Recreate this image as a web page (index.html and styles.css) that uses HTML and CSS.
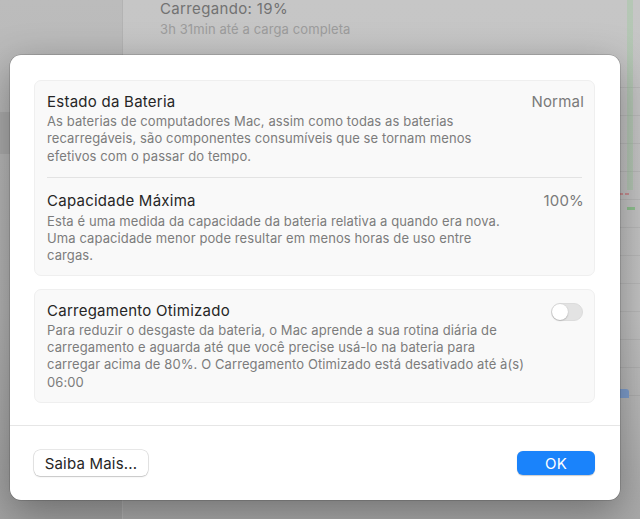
FILE: index.html
```html
<!DOCTYPE html>
<html lang="pt-BR">
<head>
<meta charset="utf-8">
<title>Saúde da Bateria</title>
<link rel="stylesheet" href="styles.css">
</head>
<body>
<div class="desktop">
  <aside class="sidebar">
    <div class="side-band"></div>
  </aside>
  <main class="main">
    <div class="status">
      <div class="status-title">Carregando: 19%</div>
      <div class="status-sub">3h 31min até a carga completa</div>
    </div>
    <div class="chart">
      <div class="chart-green"></div>
      <div class="chart-red"></div>
      <div class="chart-green-mark"></div>
      <div class="chart-blue"></div>
    </div>
  </main>

  <div class="dialog">
    <div class="dialog-body">
      <section class="group">
        <div class="row">
          <div class="row-text">
            <div class="row-title">Estado da Bateria</div>
            <p class="row-desc">As baterias de computadores Mac, assim como todas as baterias<br>recarregáveis, são componentes consumíveis que se tornam menos<br>efetivos com o passar do tempo.</p>
          </div>
          <div class="row-value">Normal</div>
        </div>
        <div class="row row-sep">
          <div class="row-text">
            <div class="row-title">Capacidade Máxima</div>
            <p class="row-desc">Esta é uma medida da capacidade da bateria relativa a quando era nova.<br>Uma capacidade menor pode resultar em menos horas de uso entre<br>cargas.</p>
          </div>
          <div class="row-value">100%</div>
        </div>
      </section>
      <section class="group">
        <div class="row">
          <div class="row-text">
            <div class="row-title">Carregamento Otimizado</div>
            <p class="row-desc">Para reduzir o desgaste da bateria, o Mac aprende a sua rotina diária de<br>carregamento e aguarda até que você precise usá-lo na bateria para<br>carregar acima de 80%. O Carregamento Otimizado está desativado até à(s)<br>06:00</p>
          </div>
          <div class="toggle"><span class="knob"></span></div>
        </div>
      </section>
    </div>
    <footer class="dialog-footer">
      <button class="btn">Saiba Mais...</button>
      <button class="btn btn-primary">OK</button>
    </footer>
  </div>
</div>
</body>
</html>
```

FILE: styles.css
```css
* { box-sizing: border-box; }
html, body { margin: 0; padding: 0; }
body {
  width: 640px;
  height: 519px;
  overflow: hidden;
  font-family: Inter, "Liberation Sans", Arial, sans-serif;
  -webkit-font-smoothing: antialiased;
}
.desktop {
  position: relative;
  display: flex;
  width: 640px;
  height: 519px;
}
.sidebar {
  width: 123px;
  flex: none;
  background: linear-gradient(to bottom, #bcbcbc 0%, #b4b4b4 60%, #a2a2a2 100%);
  border-right: 1px solid #b3b3b3;
  padding-top: 112px;
}
.side-band {
  height: 42px;
  background: #acacac;
}
.main {
  flex: 1;
  position: relative;
  background: linear-gradient(to bottom, #c6c6c6 0%, #c3c3c3 60%, #a9a9a9 100%);
  padding-left: 37px;
}
.status-title {
  font-size: 15px;
  line-height: 18px;
  color: #727272;
  letter-spacing: 0.35px;
}
.status-sub {
  font-size: 13px;
  line-height: 18px;
  color: #9c9c9c;
  margin-top: 2px;
  letter-spacing: 0.1px;
}
.chart {
  position: absolute;
  left: 490px;
  top: 60px;
  width: 30px;
  height: 360px;
  background: repeating-linear-gradient(to bottom, transparent 0 27px, rgba(0,0,0,0.06) 27px 28px);
}
.chart-green {
  position: absolute;
  left: 14px; top: -60px;
  width: 6px; height: 190px;
  background: rgba(150, 200, 150, 0.35);
}
.chart-red {
  position: absolute;
  left: 0; top: 133px;
  width: 18px; height: 2px;
  background: repeating-linear-gradient(to right, #c98f92 0 4px, transparent 4px 6px);
}
.chart-green-mark {
  position: absolute;
  left: 14px; top: 147px;
  width: 8px; height: 3px;
  background: #8fc08f;
}
.chart-blue {
  position: absolute;
  left: 0; top: 329px;
  width: 16px; height: 9px;
  border-radius: 3px 3px 0 0;
  background: #7f9fcf;
}

.dialog {
  position: absolute;
  left: 10px;
  top: 55px;
  width: 610px;
  height: 445px;
  background: #ffffff;
  border-radius: 11px;
  box-shadow: 0 0 0 0.5px rgba(0,0,0,0.25), 0 12px 40px rgba(0,0,0,0.35);
  display: flex;
  flex-direction: column;
}
.dialog-body {
  padding: 25px 25px 0 24px;
  display: flex;
  flex-direction: column;
  gap: 13px;
  height: 371px;
  border-bottom: 1px solid #e6e6e6;
}
.group {
  background: #f9f9f9;
  border: 1px solid #efefef;
  border-radius: 7px;
  padding: 0 12px;
}
.row {
  display: flex;
  justify-content: space-between;
  align-items: flex-start;
  padding: 12px 0 12px 0;
}
.row-sep {
  border-top: 1px solid #e3e3e3;
  padding-top: 14px;
  padding-bottom: 10px;
}
.row-sep .row-desc { margin-top: 3px; }
.group:last-child .row { padding-bottom: 11px; }
.row-text { flex: 1; }
.row-title {
  font-size: 15px;
  line-height: 18px;
  color: #262626;
  letter-spacing: 0.25px;
}
.row-desc {
  margin: 2px 0 0 0;
  font-size: 13px;
  line-height: 17.3px;
  color: #7c7c7c;
  letter-spacing: 0.1px;
}
.row-value {
  font-size: 15px;
  line-height: 18px;
  color: #7a7a7a;
  flex: none;
  margin-right: -2px;
  letter-spacing: 0.2px;
}
.toggle {
  margin-top: 1px;
  margin-right: -1px;
  width: 32px;
  height: 18px;
  border-radius: 9px;
  background: #e3e3e3;
  border: 1px solid #dcdcdc;
  position: relative;
  flex: none;
}
.knob {
  position: absolute;
  left: 0px; top: 0px;
  width: 16px; height: 16px;
  border-radius: 50%;
  background: #ffffff;
  box-shadow: 0 0.5px 1.5px rgba(0,0,0,0.3);
}
.dialog-footer {
  flex: 1;
  display: flex;
  justify-content: space-between;
  align-items: center;
  padding: 0 25px 0 24px;
}
.btn {
  font-family: inherit;
  font-size: 15px;
  height: 26px;
  padding: 0 10px;
  border-radius: 6px;
  border: none;
  background: #ffffff;
  color: #262626;
  box-shadow: 0 0 0 0.5px rgba(0,0,0,0.18), 0 1px 1.5px rgba(0,0,0,0.15);
  width: 114px;
  letter-spacing: 0.2px;
}
.btn-primary {
  width: 78px;
  height: 24px;
  background: #1a83fb;
  color: #ffffff;
  box-shadow: 0 0.5px 1px rgba(0,0,0,0.2);
}
```
